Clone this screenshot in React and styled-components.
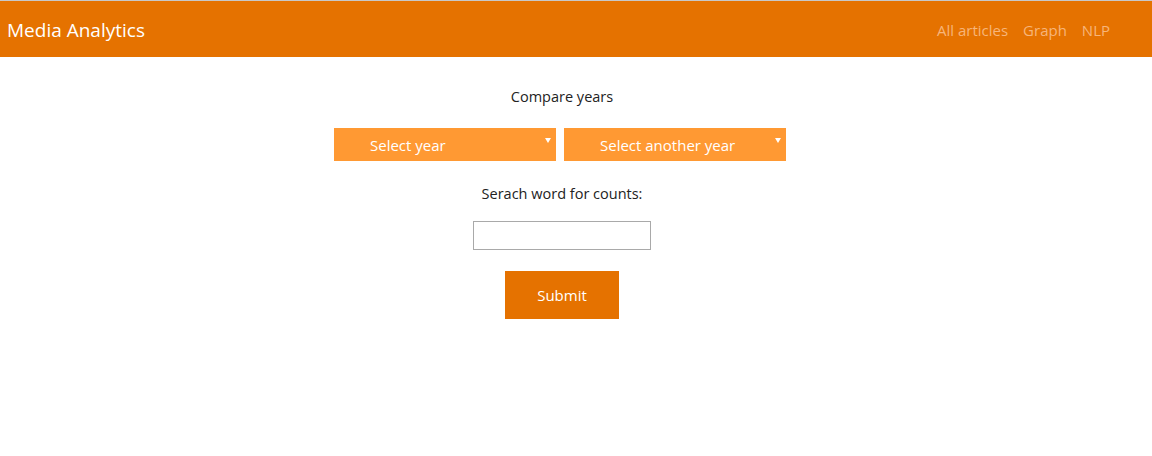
import React from "react";
import styled, { createGlobalStyle } from "styled-components";

const GlobalStyle = createGlobalStyle`
  body {
    margin: 0;
    background: #fff;
    font-family: "Open Sans", "Noto Sans", sans-serif;
    color: #222;
  }
`;

const Page = styled.div`
  border-top: 1px solid #c8c8c8;
`;

const Header = styled.header`
  height: 56px;
  padding-top: 2px;
  box-sizing: border-box;
  background-color: #e57200;
  display: flex;
  align-items: center;
  justify-content: space-between;
  padding-left: 7px;
  padding-right: 42px;
`;

const Brand = styled.div`
  color: #fff;
  font-size: 19px;
`;

const Nav = styled.nav`
  display: flex;
  gap: 15px;
`;

const NavLink = styled.a`
  color: #f7b57a;
  font-size: 15px;
  text-decoration: none;
  cursor: pointer;
`;

const Main = styled.main`
  display: flex;
  flex-direction: column;
  align-items: center;
  padding-top: 30px;
  padding-right: 32px;
`;

const Label = styled.div`
  font-size: 14.5px;
  color: #222;
  margin-bottom: ${(p) => p.gap}px;
  margin-left: ${(p) => p.shift || 0}px;
`;

const SelectRow = styled.div`
  display: flex;
  gap: 8px;
  margin-bottom: 23px;
`;

const SelectBox = styled.div`
  position: relative;
  width: 222px;
  height: 33px;
  background-color: #ff9933;
  color: #fff;
  font-size: 15px;
  display: flex;
  align-items: center;
  padding-left: 36px;
  box-sizing: border-box;
  cursor: pointer;
`;

const Arrow = styled.span`
  position: absolute;
  right: 5px;
  top: 10px;
  width: 0;
  height: 0;
  border-left: 3px solid transparent;
  border-right: 3px solid transparent;
  border-top: 5px solid #fff;
`;

const TextInput = styled.input`
  width: 178px;
  height: 29px;
  box-sizing: border-box;
  border: 1px solid #a9a9a9;
  margin: 0 0 21px 4px;
  outline: none;
`;

const SubmitButton = styled.button`
  width: 114px;
  height: 48px;
  margin-left: 4px;
  background-color: #e57200;
  color: #fff;
  border: none;
  font-family: inherit;
  font-size: 15px;
  cursor: pointer;
`;

function Select({ label }) {
  return (
    <SelectBox>
      {label}
      <Arrow />
    </SelectBox>
  );
}

export default function App() {
  return (
    <Page>
      <GlobalStyle />
      <Header>
        <Brand>Media Analytics</Brand>
        <Nav>
          <NavLink>All articles</NavLink>
          <NavLink>Graph</NavLink>
          <NavLink>NLP</NavLink>
        </Nav>
      </Header>
      <Main>
        <Label gap={22} shift={4}>Compare years</Label>
        <SelectRow>
          <Select label="Select year" />
          <Select label="Select another year" />
        </SelectRow>
        <Label gap={18} shift={4}>Serach word for counts:</Label>
        <TextInput type="text" />
        <SubmitButton>Submit</SubmitButton>
      </Main>
    </Page>
  );
}
